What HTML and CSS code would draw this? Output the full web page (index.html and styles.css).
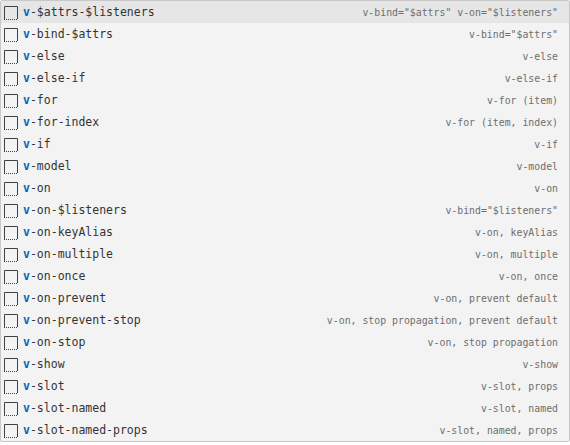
FILE: index.html
```html
<!DOCTYPE html>
<html>
<head>
<meta charset="utf-8">
<link rel="stylesheet" href="styles.css">
</head>
<body>
<div class="suggest">
  <div class="row selected"><svg class="icon" viewBox="0 0 16 16"><path d="M1.5 15V2.5h13V15"/><line class="dots" x1="1" y1="15.5" x2="15" y2="15.5"/></svg><span class="label"><b>v</b>-$attrs-$listeners</span><span class="detail">v-bind="$attrs" v-on="$listeners"</span></div>
  <div class="row"><svg class="icon" viewBox="0 0 16 16"><path d="M1.5 15V2.5h13V15"/><line class="dots" x1="1" y1="15.5" x2="15" y2="15.5"/></svg><span class="label"><b>v</b>-bind-$attrs</span><span class="detail">v-bind="$attrs"</span></div>
  <div class="row"><svg class="icon" viewBox="0 0 16 16"><path d="M1.5 15V2.5h13V15"/><line class="dots" x1="1" y1="15.5" x2="15" y2="15.5"/></svg><span class="label"><b>v</b>-else</span><span class="detail">v-else</span></div>
  <div class="row"><svg class="icon" viewBox="0 0 16 16"><path d="M1.5 15V2.5h13V15"/><line class="dots" x1="1" y1="15.5" x2="15" y2="15.5"/></svg><span class="label"><b>v</b>-else-if</span><span class="detail">v-else-if</span></div>
  <div class="row"><svg class="icon" viewBox="0 0 16 16"><path d="M1.5 15V2.5h13V15"/><line class="dots" x1="1" y1="15.5" x2="15" y2="15.5"/></svg><span class="label"><b>v</b>-for</span><span class="detail">v-for (item)</span></div>
  <div class="row"><svg class="icon" viewBox="0 0 16 16"><path d="M1.5 15V2.5h13V15"/><line class="dots" x1="1" y1="15.5" x2="15" y2="15.5"/></svg><span class="label"><b>v</b>-for-index</span><span class="detail">v-for (item, index)</span></div>
  <div class="row"><svg class="icon" viewBox="0 0 16 16"><path d="M1.5 15V2.5h13V15"/><line class="dots" x1="1" y1="15.5" x2="15" y2="15.5"/></svg><span class="label"><b>v</b>-if</span><span class="detail">v-if</span></div>
  <div class="row"><svg class="icon" viewBox="0 0 16 16"><path d="M1.5 15V2.5h13V15"/><line class="dots" x1="1" y1="15.5" x2="15" y2="15.5"/></svg><span class="label"><b>v</b>-model</span><span class="detail">v-model</span></div>
  <div class="row"><svg class="icon" viewBox="0 0 16 16"><path d="M1.5 15V2.5h13V15"/><line class="dots" x1="1" y1="15.5" x2="15" y2="15.5"/></svg><span class="label"><b>v</b>-on</span><span class="detail">v-on</span></div>
  <div class="row"><svg class="icon" viewBox="0 0 16 16"><path d="M1.5 15V2.5h13V15"/><line class="dots" x1="1" y1="15.5" x2="15" y2="15.5"/></svg><span class="label"><b>v</b>-on-$listeners</span><span class="detail">v-bind="$listeners"</span></div>
  <div class="row"><svg class="icon" viewBox="0 0 16 16"><path d="M1.5 15V2.5h13V15"/><line class="dots" x1="1" y1="15.5" x2="15" y2="15.5"/></svg><span class="label"><b>v</b>-on-keyAlias</span><span class="detail">v-on, keyAlias</span></div>
  <div class="row"><svg class="icon" viewBox="0 0 16 16"><path d="M1.5 15V2.5h13V15"/><line class="dots" x1="1" y1="15.5" x2="15" y2="15.5"/></svg><span class="label"><b>v</b>-on-multiple</span><span class="detail">v-on, multiple</span></div>
  <div class="row"><svg class="icon" viewBox="0 0 16 16"><path d="M1.5 15V2.5h13V15"/><line class="dots" x1="1" y1="15.5" x2="15" y2="15.5"/></svg><span class="label"><b>v</b>-on-once</span><span class="detail">v-on, once</span></div>
  <div class="row"><svg class="icon" viewBox="0 0 16 16"><path d="M1.5 15V2.5h13V15"/><line class="dots" x1="1" y1="15.5" x2="15" y2="15.5"/></svg><span class="label"><b>v</b>-on-prevent</span><span class="detail">v-on, prevent default</span></div>
  <div class="row"><svg class="icon" viewBox="0 0 16 16"><path d="M1.5 15V2.5h13V15"/><line class="dots" x1="1" y1="15.5" x2="15" y2="15.5"/></svg><span class="label"><b>v</b>-on-prevent-stop</span><span class="detail">v-on, stop propagation, prevent default</span></div>
  <div class="row"><svg class="icon" viewBox="0 0 16 16"><path d="M1.5 15V2.5h13V15"/><line class="dots" x1="1" y1="15.5" x2="15" y2="15.5"/></svg><span class="label"><b>v</b>-on-stop</span><span class="detail">v-on, stop propagation</span></div>
  <div class="row"><svg class="icon" viewBox="0 0 16 16"><path d="M1.5 15V2.5h13V15"/><line class="dots" x1="1" y1="15.5" x2="15" y2="15.5"/></svg><span class="label"><b>v</b>-show</span><span class="detail">v-show</span></div>
  <div class="row"><svg class="icon" viewBox="0 0 16 16"><path d="M1.5 15V2.5h13V15"/><line class="dots" x1="1" y1="15.5" x2="15" y2="15.5"/></svg><span class="label"><b>v</b>-slot</span><span class="detail">v-slot, props</span></div>
  <div class="row"><svg class="icon" viewBox="0 0 16 16"><path d="M1.5 15V2.5h13V15"/><line class="dots" x1="1" y1="15.5" x2="15" y2="15.5"/></svg><span class="label"><b>v</b>-slot-named</span><span class="detail">v-slot, named</span></div>
  <div class="row"><svg class="icon" viewBox="0 0 16 16"><path d="M1.5 15V2.5h13V15"/><line class="dots" x1="1" y1="15.5" x2="15" y2="15.5"/></svg><span class="label"><b>v</b>-slot-named-props</span><span class="detail">v-slot, named, props</span></div>
</div>
</body>
</html>
```
FILE: styles.css
```css
html, body {
  margin: 0;
  padding: 0;
  background: #ffffff;
}

.suggest {
  width: 570px;
  box-sizing: border-box;
  border: 1px solid #c8c8c8;
  border-radius: 2px;
  background: #f3f3f3;
  font-family: "DejaVu Sans Mono", monospace;
  color: #333333;
}

.row {
  display: flex;
  align-items: center;
  height: 22px;
  padding: 0 11px 0 2px;
}

.row.selected {
  background: #e6e6e6;
}

.icon {
  width: 16px;
  height: 16px;
  flex: none;
  margin-right: 4px;
  fill: none;
  stroke: #424242;
  stroke-width: 1;
}

.icon .dots {
  stroke-dasharray: 1 1;
}

.label {
  font-size: 11.5px;
  white-space: pre;
}

.label b {
  color: #0066bf;
  font-weight: bold;
}

.detail {
  margin-left: auto;
  font-size: 9.85px;
  color: #6e6e6e;
  white-space: pre;
}
```
